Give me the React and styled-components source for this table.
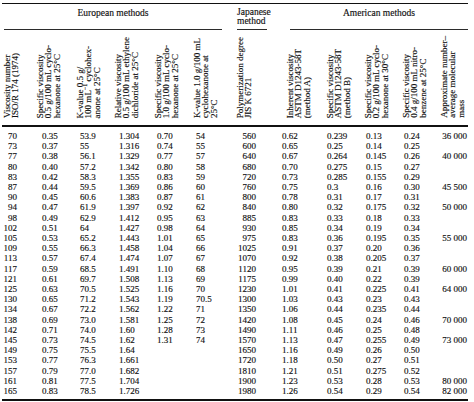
import styled, { createGlobalStyle } from 'styled-components';

const GlobalStyle = createGlobalStyle`
  body {
    margin: 0;
    background: #ffffff;
  }
`;

const ink = '#111111';

const Page = styled.div`
  padding: 3px 0 0 2px;
  font-family: "Liberation Serif", "Times New Roman", serif;
  color: ${ink};
  -webkit-text-stroke: 0.15px ${ink};
`;

const Table = styled.table`
  border-collapse: separate;
  border-spacing: 0;
  table-layout: fixed;
  width: 466px;
`;

const Col = styled.col`
  width: ${({ $w }) => $w}px;
`;

const GroupCell = styled.th`
  border-top: 1px solid ${ink};
  padding: 0;
  font-weight: normal;
  vertical-align: top;
`;

const GroupLabel = styled.div`
  box-sizing: border-box;
  height: 26px;
  margin: ${({ $inset }) => $inset};
  padding-top: ${({ $top }) => $top}px;
  border-bottom: 1px solid #2b2b2b;
  font-size: 9.5px;
  line-height: 9px;
  text-align: ${({ $align }) => $align || 'center'};
  white-space: nowrap;
`;

const HeadCell = styled.th`
  height: 88px;
  padding: 0 0 7px ${({ $pad }) => $pad}px;
  border-bottom: 2px solid ${ink};
  font-weight: normal;
  vertical-align: bottom;
  text-align: left;
`;

const RotText = styled.div`
  writing-mode: vertical-rl;
  transform: rotate(180deg);
  font-size: 9px;
  line-height: 8.4px;
  white-space: nowrap;
  text-align: left;

  sup {
    font-size: 6px;
    line-height: 0;
    vertical-align: 3px;
  }
`;

const Row = styled.tr`
  &:first-child > td {
    padding-top: 4px;
  }

  &:last-child > td {
    padding-bottom: 3px;
    border-bottom: 2px solid ${ink};
  }
`;

const Cell = styled.td`
  padding: 0 ${({ $r }) => $r}px 0 ${({ $l }) => $l}px;
  font-size: 9px;
  line-height: 10.2px;
  text-align: ${({ $align }) => $align};
  white-space: nowrap;
`;

const columns = [
  { w: 34, head: 1, align: 'right', l: 0, r: 19, title: ['Viscosity number', 'ISO/R 174 (1974)'] },
  { w: 40, head: 0, align: 'left', l: 6, r: 0, title: ['Specific viscosity', '0.5 g/100 mL cyclo-', 'hexanone at 25°C'] },
  { w: 38, head: 0, align: 'left', l: 4, r: 0, title: ['K-value 0.5 g/', <>100 mL<sup>−1</sup> cyclohex-</>, 'anone at 25°C'] },
  { w: 40, head: 0, align: 'left', l: 5, r: 0, title: ['Relative viscosity', '0.5 g/100 mL ethylene', 'dichloride at 25°C'] },
  { w: 39, head: 0, align: 'left', l: 3, r: 0, title: ['Specific viscosity', '1.0 g/100 mL cyclo-', 'hexanone at 25°C'] },
  { w: 42, head: 0, align: 'left', l: 3, r: 0, title: ['K-value 1.0 g/100 mL', 'cyclohexanone at', '25°C'] },
  { w: 45, head: 1, align: 'right', l: 0, r: 24, title: ['Polymerization degree', 'JIS K 6721'] },
  { w: 45, head: 6, align: 'left', l: 2, r: 0, title: ['Inherent viscosity', 'ASTM D1243-58T', '(method A)'] },
  { w: 39, head: 1, align: 'left', l: 2, r: 0, title: ['Specific viscosity', 'ASTM D1243-58T', '(method B)'] },
  { w: 38, head: 0, align: 'left', l: 2, r: 0, title: ['Specific viscosity', '0.2 g/100 mL cyclo-', 'hexanone at 30°C'] },
  { w: 38, head: 0, align: 'left', l: 2, r: 0, title: ['Specific viscosity', '0.4 g/100 mL nitro-', 'benzene at 25°C'] },
  { w: 28, head: 0, align: 'right', l: 0, r: 1, title: ['Approximate number–', 'average molecular', 'mass'] },
];

const rows = [
  ['70', '0.35', '53.9', '1.304', '0.70', '54', '560', '0.62', '0.239', '0.13', '0.24', '36 000'],
  ['73', '0.37', '55', '1.316', '0.74', '55', '600', '0.65', '0.25', '0.14', '0.25', ''],
  ['77', '0.38', '56.1', '1.329', '0.77', '57', '640', '0.67', '0.264', '0.145', '0.26', '40 000'],
  ['80', '0.40', '57.2', '1.342', '0.80', '58', '680', '0.70', '0.275', '0.15', '0.27', ''],
  ['83', '0.42', '58.3', '1.355', '0.83', '59', '720', '0.73', '0.285', '0.155', '0.29', ''],
  ['87', '0.44', '59.5', '1.369', '0.86', '60', '760', '0.75', '0.3', '0.16', '0.30', '45 500'],
  ['90', '0.45', '60.6', '1.383', '0.87', '61', '800', '0.78', '0.31', '0.17', '0.31', ''],
  ['94', '0.47', '61.9', '1.397', '0.92', '62', '840', '0.80', '0.32', '0.175', '0.32', '50 000'],
  ['98', '0.49', '62.9', '1.412', '0.95', '63', '885', '0.83', '0.33', '0.18', '0.33', ''],
  ['102', '0.51', '64', '1.427', '0.98', '64', '930', '0.85', '0.34', '0.19', '0.34', ''],
  ['105', '0.53', '65.2', '1.443', '1.01', '65', '975', '0.83', '0.36', '0.195', '0.35', '55 000'],
  ['109', '0.55', '66.3', '1.458', '1.04', '66', '1025', '0.91', '0.37', '0.20', '0.36', ''],
  ['113', '0.57', '67.4', '1.474', '1.07', '67', '1070', '0.92', '0.38', '0.205', '0.37', ''],
  ['117', '0.59', '68.5', '1.491', '1.10', '68', '1120', '0.95', '0.39', '0.21', '0.39', '60 000'],
  ['121', '0.61', '69.7', '1.508', '1.13', '69', '1175', '0.99', '0.40', '0.22', '0.39', ''],
  ['125', '0.63', '70.5', '1.525', '1.16', '70', '1230', '1.01', '0.41', '0.225', '0.41', '64 000'],
  ['130', '0.65', '71.2', '1.543', '1.19', '70.5', '1300', '1.03', '0.43', '0.23', '0.43', ''],
  ['134', '0.67', '72.2', '1.562', '1.22', '71', '1350', '1.06', '0.44', '0.235', '0.44', ''],
  ['138', '0.69', '73.0', '1.581', '1.25', '72', '1420', '1.08', '0.45', '0.24', '0.46', '70 000'],
  ['142', '0.71', '74.0', '1.60', '1.28', '73', '1490', '1.11', '0.46', '0.25', '0.48', ''],
  ['145', '0.73', '74.5', '1.62', '1.31', '74', '1570', '1.13', '0.47', '0.255', '0.49', '73 000'],
  ['149', '0.75', '75.5', '1.64', '', '', '1650', '1.16', '0.49', '0.26', '0.50', ''],
  ['153', '0.77', '76.3', '1.661', '', '', '1720', '1.18', '0.50', '0.27', '0.51', ''],
  ['157', '0.79', '77.0', '1.682', '', '', '1810', '1.21', '0.51', '0.275', '0.52', ''],
  ['161', '0.81', '77.5', '1.704', '', '', '1900', '1.23', '0.53', '0.28', '0.53', '80 000'],
  ['165', '0.83', '78.5', '1.726', '', '', '1980', '1.26', '0.54', '0.29', '0.54', '82 000'],
];

const App = () => {
  return (
    <Page>
      <GlobalStyle />
      <Table>
        <colgroup>
          {columns.map((col, i) => (
            <Col key={i} $w={col.w} />
          ))}
        </colgroup>
        <thead>
          <tr>
            <GroupCell colSpan={6}>
              <GroupLabel $inset="0 13px 0 2px" $top={5}>
                European methods
              </GroupLabel>
            </GroupCell>
            <GroupCell>
              <GroupLabel $inset="0 13px 0 2px" $top={4} $align="left">
                Japanese
                <br />
                method
              </GroupLabel>
            </GroupCell>
            <GroupCell colSpan={5}>
              <GroupLabel $inset="0 0 0 10px" $top={5}>
                American methods
              </GroupLabel>
            </GroupCell>
          </tr>
          <tr>
            {columns.map((col, i) => (
              <HeadCell key={i} $pad={col.head}>
                <RotText>
                  {col.title.map((line, j) => (
                    <span key={j}>
                      {j > 0 && <br />}
                      {line}
                    </span>
                  ))}
                </RotText>
              </HeadCell>
            ))}
          </tr>
        </thead>
        <tbody>
          {rows.map((row) => (
            <Row key={row[0]}>
              {row.map((value, i) => (
                <Cell key={i} $align={columns[i].align} $l={columns[i].l} $r={columns[i].r}>
                  {value}
                </Cell>
              ))}
            </Row>
          ))}
        </tbody>
      </Table>
    </Page>
  );
};

export default App;
